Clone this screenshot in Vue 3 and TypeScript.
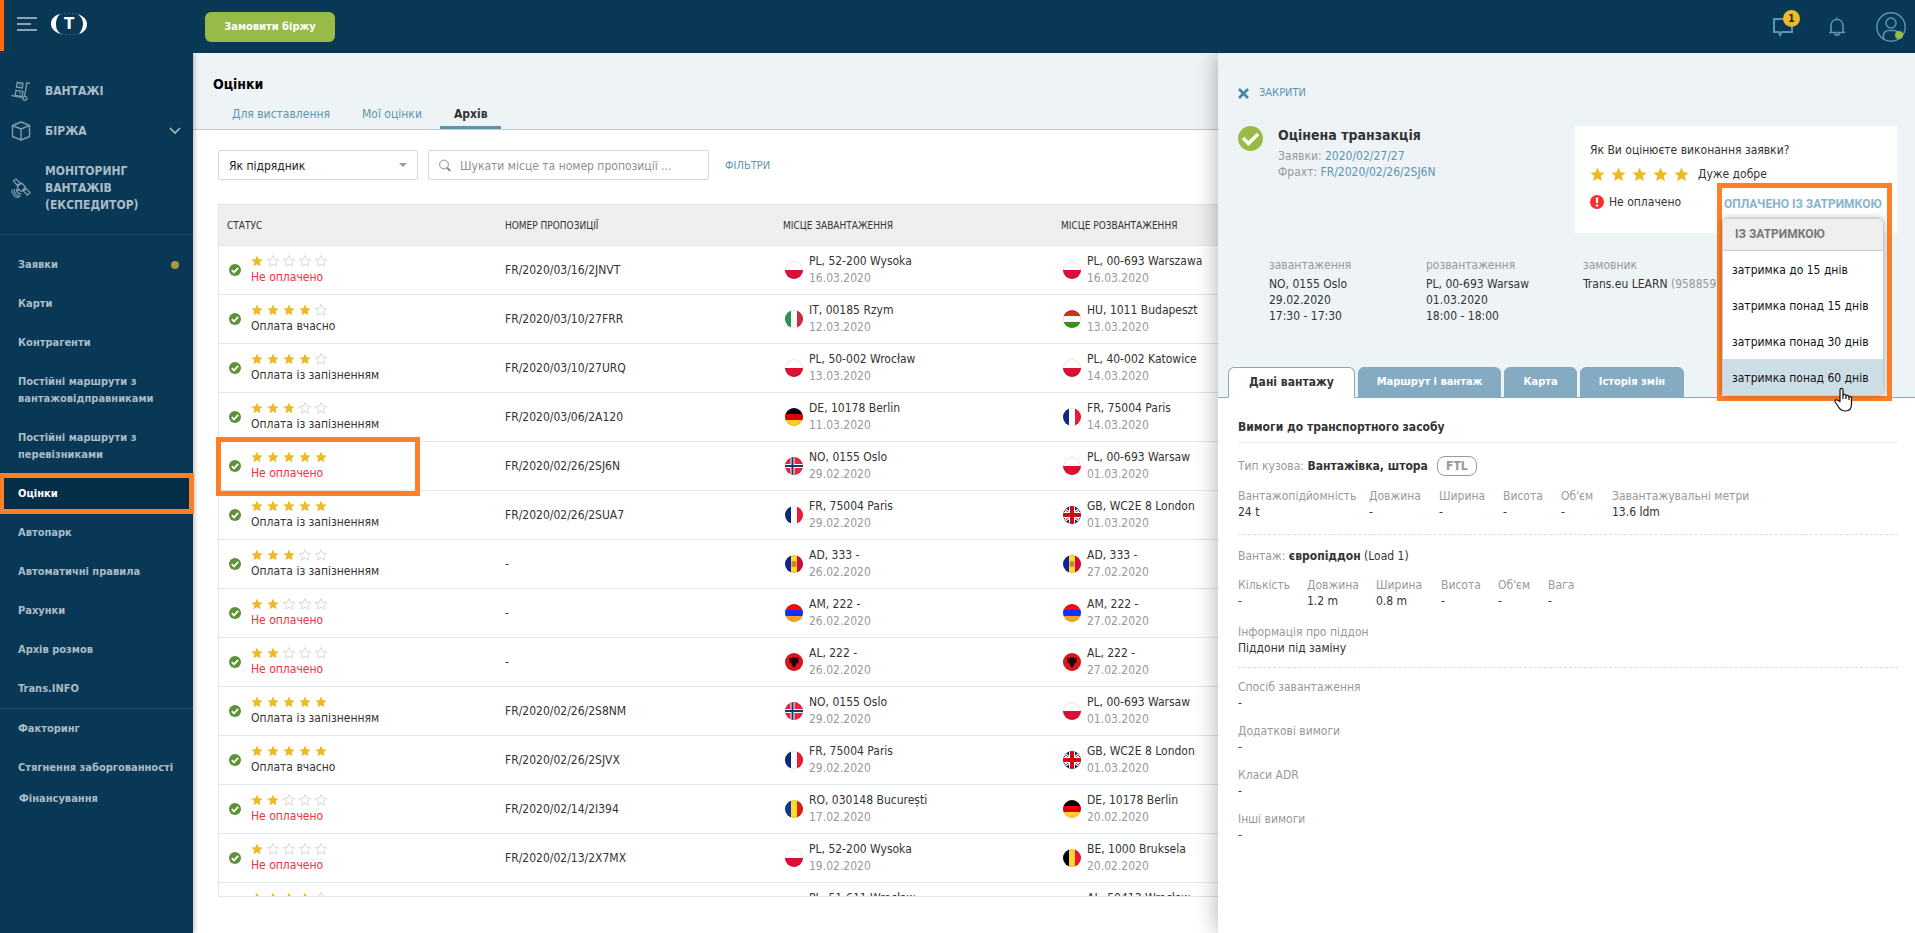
<script setup lang="ts">
import { ref } from 'vue'

interface MenuItem { label: string; dot?: boolean; active?: boolean }
interface Place { code: string; text: string; date: string }
interface Row { stars: number; status: string; late?: boolean; number: string; from: Place; to: Place; marked?: boolean }
interface Flag { vertical?: boolean; colors: string[] }

const star = 'M8 0.6l2.2 5 5.4.5-4.1 3.6 1.2 5.3L8 12.2 3.3 15l1.2-5.3L.4 6.1l5.4-.5z'

const menu: MenuItem[] = [
  { label: 'Заявки', dot: true },
  { label: 'Карти' },
  { label: 'Контрагенти' },
  { label: 'Постійні маршрути з вантажовідправниками' },
  { label: 'Постійні маршрути з перевізниками' },
  { label: 'Оцінки', active: true },
  { label: 'Автопарк' },
  { label: 'Автоматичні правила' },
  { label: 'Рахунки' },
  { label: 'Архів розмов' },
  { label: 'Trans.INFO' },
]
const services: MenuItem[] = [
  { label: 'Факторинг' },
  { label: 'Стягнення заборгованності' },
]

const flags: Record<string, Flag> = {
  PL: { colors: ['#ffffff', '#dc1035'] },
  IT: { vertical: true, colors: ['#2c9450', '#ffffff', '#cf2b3a'] },
  HU: { colors: ['#d5301f', '#ffffff', '#3d8f1d'] },
  DE: { colors: ['#000000', '#dd0000', '#ffce29'] },
  FR: { vertical: true, colors: ['#0a2c80', '#ffffff', '#f01a32'] },
  AD: { vertical: true, colors: ['#11239c', '#fedd22', '#d4083a'] },
  AM: { colors: ['#ff0808', '#1030ff', '#ffa01e'] },
  RO: { vertical: true, colors: ['#0c3a9a', '#fddb2b', '#de1f10'] },
  BE: { vertical: true, colors: ['#000000', '#ffd42c', '#f01634'] },
  AL: { colors: ['#e0151c'] },
  NO: { colors: ['#ec2440'] },
  GB: { colors: ['#1a1e70'] },
}

const p = (code: string, text: string, date: string): Place => ({ code, text, date })
const unpaid = 'Не оплачено'
const onTime = 'Оплата вчасно'
const delayed = 'Оплата із запізненням'

const rows: Row[] = [
  { stars: 1, status: unpaid, late: true, number: 'FR/2020/03/16/2JNVT', from: p('PL', '52-200 Wysoka', '16.03.2020'), to: p('PL', '00-693 Warszawa', '16.03.2020') },
  { stars: 4, status: onTime, number: 'FR/2020/03/10/27FRR', from: p('IT', '00185 Rzym', '12.03.2020'), to: p('HU', '1011 Budapeszt', '13.03.2020') },
  { stars: 4, status: delayed, number: 'FR/2020/03/10/27URQ', from: p('PL', '50-002 Wrocław', '13.03.2020'), to: p('PL', '40-002 Katowice', '14.03.2020') },
  { stars: 3, status: delayed, number: 'FR/2020/03/06/2A120', from: p('DE', '10178 Berlin', '11.03.2020'), to: p('FR', '75004 Paris', '14.03.2020') },
  { stars: 5, status: unpaid, late: true, marked: true, number: 'FR/2020/02/26/2SJ6N', from: p('NO', '0155 Oslo', '29.02.2020'), to: p('PL', '00-693 Warsaw', '01.03.2020') },
  { stars: 5, status: delayed, number: 'FR/2020/02/26/2SUA7', from: p('FR', '75004 Paris', '29.02.2020'), to: p('GB', 'WC2E 8 London', '01.03.2020') },
  { stars: 3, status: delayed, number: '-', from: p('AD', '333 -', '26.02.2020'), to: p('AD', '333 -', '27.02.2020') },
  { stars: 2, status: unpaid, late: true, number: '-', from: p('AM', '222 -', '26.02.2020'), to: p('AM', '222 -', '27.02.2020') },
  { stars: 2, status: unpaid, late: true, number: '-', from: p('AL', '222 -', '26.02.2020'), to: p('AL', '222 -', '27.02.2020') },
  { stars: 5, status: delayed, number: 'FR/2020/02/26/2S8NM', from: p('NO', '0155 Oslo', '29.02.2020'), to: p('PL', '00-693 Warsaw', '01.03.2020') },
  { stars: 5, status: onTime, number: 'FR/2020/02/26/2SJVX', from: p('FR', '75004 Paris', '29.02.2020'), to: p('GB', 'WC2E 8 London', '01.03.2020') },
  { stars: 2, status: unpaid, late: true, number: 'FR/2020/02/14/2I394', from: p('RO', '030148 București', '17.02.2020'), to: p('DE', '10178 Berlin', '20.02.2020') },
  { stars: 1, status: unpaid, late: true, number: 'FR/2020/02/13/2X7MX', from: p('PL', '52-200 Wysoka', '19.02.2020'), to: p('BE', '1000 Bruksela', '20.02.2020') },
  { stars: 4, status: '', number: '', from: p('PL', '51-611 Wrocław', ''), to: p('AL', '50413 Wrocław', '') },
]

const pageTabs = ['Для виставлення', 'Мої оцінки', 'Архів']
const pageTab = ref('Архів')
const role = ref('Як підрядник')
const query = ref('')

const detailTabs = ['Дані вантажу', 'Маршрут і вантаж', 'Карта', 'Історія змін']
const detailTab = ref('Дані вантажу')

const delays = ['затримка до 15 днів', 'затримка понад 15 днів', 'затримка понад 30 днів', 'затримка понад 60 днів']
const hovered = ref(3)

const vehicle: [string, string][] = [
  ['Вантажопідйомність', '24 t'], ['Довжина', '-'], ['Ширина', '-'], ['Висота', '-'], ["Об'єм", '-'], ['Завантажувальні метри', '13.6 ldm'],
]
const load: [string, string][] = [
  ['Кількість', '-'], ['Довжина', '1.2 m'], ['Ширина', '0.8 m'], ['Висота', '-'], ["Об'єм", '-'], ['Вага', '-'],
]
const extras: [string, string][] = [
  ['Спосіб завантаження', '-'], ['Додаткові вимоги', '-'], ['Класи ADR', '-'], ['Інші вимоги', '-'],
]
</script>

<template>
  <div class="app">
    <header class="topbar">
      <button class="icon-btn burger" type="button" aria-label="Меню">
        <svg width="20" height="16" viewBox="0 0 20 16" fill="none" stroke="#8aa5b6" stroke-width="2"><path d="M0 2h20M0 8h14M0 14h20" /></svg>
      </button>
      <a class="logo" href="#" aria-label="Trans">
        <svg width="38" height="22" viewBox="0 0 38 22">
          <path d="M10 1C3 3 1 7 1 11s3 8 10 10C7 18 6 15 6 11s1-7 4-10z" fill="#fff" />
          <path d="M27 1c7 2 10 6 10 10s-2 8-8 10c2-3 4-6 4-10s-2-8-6-10z" fill="#fff" />
          <path d="M10 1c5-1 11-1 17 0M11 21c5 1 11 1 17 0" fill="none" stroke="#fff" stroke-opacity=".25" stroke-dasharray="2 2" />
          <text x="19" y="16" text-anchor="middle" fill="#fff" font-family="DejaVu Sans, sans-serif" font-size="15" font-weight="700">T</text>
        </svg>
      </a>
      <button class="order" type="button">Замовити біржу</button>
      <div class="tools">
        <button class="icon-btn chat" type="button" aria-label="Повідомлення">
          <svg width="22" height="20" viewBox="0 0 22 20" fill="none" stroke="#5b95b3" stroke-width="2"><path d="M11 2H2v13h5l1 3 2-3h10V9" /></svg>
          <span class="badge">1</span>
        </button>
        <button class="icon-btn bell" type="button" aria-label="Сповіщення">
          <svg width="18" height="20" viewBox="0 0 18 20" fill="none" stroke="#5b95b3" stroke-width="1.6"><path d="M1 15.5h16M3 15V9c0-4 2.500-6.500 6-6.500S15 5 15 9v6M9 .5v2M6.500 16.500c.5 2.200 4.500 2.200 5 0" /></svg>
        </button>
        <button class="icon-btn avatar" type="button" aria-label="Профіль">
          <svg width="30" height="30" viewBox="0 0 30 30" fill="none" stroke="#5b95b3" stroke-width="1.5"><circle cx="15" cy="15" r="14.200" /><circle cx="15" cy="11" r="5" /><path d="M7.500 27v-2.500c0-4 2-6 5-6h5c3 0 4.500 1 5 3" /><circle cx="23" cy="23" r="4" fill="#98bb48" stroke="none" /></svg>
        </button>
      </div>
    </header>

    <div class="body">
      <nav class="sidebar" aria-label="Головне меню">
        <a class="main-link" href="#">
          <svg width="20" height="20" viewBox="0 0 20 20" fill="none" stroke="#7f9bad" stroke-width="1.300"><path d="M.5 14.500l11 2.200M19 2.200l-3.200-.2-2.200 13.200" /><circle cx="14" cy="17.200" r="1.900" /><path d="M5 9.300l7 .9-.8 5.200-7-1.100zM6.200 1.500l5.800.8-.7 4.600-5.800-.8zM8 11.800l2 .3M8.500 3.800l1.500.2" /></svg>
          <span>ВАНТАЖІ</span>
        </a>
        <a class="main-link" href="#">
          <svg width="20" height="20" viewBox="0 0 20 20" fill="none" stroke="#7f9bad" stroke-width="1.400" stroke-linejoin="round"><path d="M10 1l8.500 3.500v11L10 19l-8.500-3.500v-11zM1.500 4.500L10 8l8.500-3.500M10 8v11" /></svg>
          <span>БІРЖА</span>
          <svg class="chevron" width="12" height="8" viewBox="0 0 12 8" fill="none" stroke="#a9bac5" stroke-width="1.600"><path d="M1 1l5 5 5-5" /></svg>
        </a>
        <a class="main-link tall" href="#">
          <svg width="20" height="20" viewBox="0 0 20 20" fill="none" stroke="#7f9bad" stroke-width="1.300"><path d="M2.500 3L5 1l4 4-2.500 2.500zM12.500 13l2.500-2.500 4 4-2.500 2.500zM6.500 8.500l4-3.500 4 4-3.800 4.200c-2-.3-4-2.300-4.200-4.700zM8.500 11l-2 2M5.500 10.500c-.5 3 1.500 5.500 4.500 5.500M3.300 11c-.5 4.500 2.500 7.500 6.500 7.200M1 11.500C.8 16.500 4 19.500 8 19.500" /></svg>
          <span>МОНІТОРИНГ ВАНТАЖІВ (ЕКСПЕДИТОР)</span>
        </a>
        <ul class="menu">
          <li v-for="m in menu" :key="m.label">
            <a href="#" :class="{ active: m.active }"><span>{{ m.label }}</span><i v-if="m.dot" class="dot"></i></a>
          </li>
        </ul>
        <ul class="menu services">
          <li v-for="m in services" :key="m.label"><a href="#"><span>{{ m.label }}</span></a></li>
          <li><a class="compact" href="#">Фінансування</a></li>
        </ul>
      </nav>

      <main class="page">
        <div class="page-head">
          <h1>Оцінки</h1>
          <div class="page-tabs" role="tablist">
            <button v-for="t in pageTabs" :key="t" type="button" role="tab" :aria-selected="t === pageTab" :class="{ on: t === pageTab }" @click="pageTab = t">{{ t }}</button>
          </div>
        </div>

        <div class="filters">
          <div class="select-box">
            <select v-model="role" aria-label="Роль"><option>Як підрядник</option></select>
            <svg width="8" height="4" viewBox="0 0 8 4"><path d="M0 0h8L4 4z" fill="#999" /></svg>
          </div>
          <div class="search">
            <svg width="12" height="13" viewBox="0 0 12 13" fill="none" stroke="#8c8c8c"><circle cx="5" cy="5.500" r="4.400" /><path d="M8 8.500l3.200 3.500" stroke-width="2" /></svg>
            <input v-model="query" type="text" placeholder="Шукати місце та номер пропозиції ..." aria-label="Пошук" />
          </div>
          <button class="link" type="button">ФІЛЬТРИ</button>
        </div>

        <div class="table-wrap">
          <table>
            <thead>
              <tr><th>СТАТУС</th><th>НОМЕР ПРОПОЗИЦІЇ</th><th>МІСЦЕ ЗАВАНТАЖЕННЯ</th><th>МІСЦЕ РОЗВАНТАЖЕННЯ</th></tr>
            </thead>
            <tbody>
              <tr v-for="(r, i) in rows" :key="i">
                <td :class="{ marked: r.marked }">
                  <div class="status">
                    <svg width="12" height="12" viewBox="0 0 12 12"><circle cx="6" cy="6" r="6" fill="#5f9138" /><path d="M2.800 6.200l2.200 2.200 4.200-4.600" fill="none" stroke="#fff" stroke-width="1.800" /></svg>
                    <div>
                      <div class="stars">
                        <svg v-for="n in 5" :key="n" width="12" height="12" viewBox="0 0 16 16"><path :d="star" :class="n <= r.stars ? 'full' : 'empty'" /></svg>
                      </div>
                      <div class="status-text" :class="{ late: r.late }">{{ r.status }}</div>
                    </div>
                  </div>
                </td>
                <td class="number">{{ r.number }}</td>
                <td v-for="(pl, k) in [r.from, r.to]" :key="k">
                  <div class="place">
                    <svg class="flag" width="18" height="18" viewBox="0 0 18 18">
                      <template v-if="flags[pl.code].vertical">
                        <rect v-for="(c, j) in flags[pl.code].colors" :key="j" :x="j * 6" y="0" width="6" height="18" :fill="c" />
                      </template>
                      <template v-else>
                        <rect v-for="(c, j) in flags[pl.code].colors" :key="j" x="0" :y="(j * 18) / flags[pl.code].colors.length" width="18" :height="18 / flags[pl.code].colors.length" :fill="c" />
                      </template>
                      <template v-if="pl.code === 'NO'">
                        <path d="M7.500 0v18M0 9h18" stroke="#fff" stroke-width="4" />
                        <path d="M7.500 0v18M0 9h18" stroke="#123a72" stroke-width="2" />
                      </template>
                      <template v-if="pl.code === 'GB'">
                        <path d="M0 2l18 14M0 16L18 2" stroke="#fff" stroke-width="3" />
                        <path d="M0 2l18 14M0 16L18 2" stroke="#c8202c" stroke-width="1" />
                        <path d="M9 0v18M0 9h18" stroke="#fff" stroke-width="6" />
                        <path d="M9 0v18M0 9h18" stroke="#cf0a14" stroke-width="4" />
                      </template>
                      <template v-if="pl.code === 'AD'">
                        <rect x="6.500" y="6" width="5" height="6" rx="1" fill="#d4943a" /><path d="M7 9h4M9 6.500v5" stroke="#b8702c" stroke-width=".7" />
                      </template>
                      <path v-if="pl.code === 'AL'" d="M9 5L7.500 3.500 7.300 5.500 4 4.500l.5 2 .2 4 1.800-.5.500 2.200L9 15l2-2.800.5-2.200 1.800.5.200-4 .5-2-3.300 1-.2-2z" fill="#1c0606" />
                      <circle cx="9" cy="9" r="8.500" fill="none" stroke="#000" stroke-opacity=".13" />
                    </svg>
                    <div><div>{{ pl.code }}, {{ pl.text }}</div><div class="date">{{ pl.date }}</div></div>
                  </div>
                </td>
              </tr>
            </tbody>
          </table>
        </div>
      </main>

      <aside class="panel">
        <div class="panel-head">
          <button class="close" type="button">
            <svg width="11" height="11" viewBox="0 0 11 11" fill="none" stroke="#4784a4" stroke-width="2.600"><path d="M1 1l9 9M10 1l-9 9" /></svg>
            <span>ЗАКРИТИ</span>
          </button>
          <div class="summary">
            <svg width="25" height="25" viewBox="0 0 25 25"><circle cx="12.500" cy="12.500" r="12.500" fill="#98bb48" /><path d="M5 12l5.500 5.500L20 8" fill="none" stroke="#fff" stroke-width="3.400" /></svg>
            <div class="transaction">
              <h2>Оцінена транзакція</h2>
              <p>Заявки: <a href="#">2020/02/27/27</a></p>
              <p>Фрахт: <a href="#">FR/2020/02/26/2SJ6N</a></p>
            </div>
            <div class="card">
              <p>Як Ви оцінюєте виконання заявки?</p>
              <div class="rate">
                <div class="rate-stars"><svg v-for="n in 5" :key="n" width="15" height="15" viewBox="0 0 16 16"><path :d="star" class="full" /></svg></div>
                <span>Дуже добре</span>
              </div>
              <div class="unpaid">
                <svg width="14" height="14" viewBox="0 0 14 14"><circle cx="7" cy="7" r="7" fill="#fb2d2d" /><path d="M7 2.500V8M7 9.500v2" stroke="#fff" stroke-width="2.200" /></svg>
                <span>Не оплачено</span>
              </div>
              <div class="callout">
                <button class="delayed" type="button">ОПЛАЧЕНО ІЗ ЗАТРИМКОЮ</button>
                <div class="dropdown">
                  <div class="dropdown-title">ІЗ ЗАТРИМКОЮ</div>
                  <button v-for="(d, i) in delays" :key="d" type="button" :class="{ hover: i === hovered }" @mouseenter="hovered = i">{{ d }}</button>
                </div>
                <svg class="cursor" width="20" height="25" viewBox="0 0 20 25" fill="#fff" stroke="#111" stroke-width="1.200" stroke-linejoin="round"><path d="M6 14.500V3c0-2.200 3-2.200 3 0v5c.5-1 2.800-.8 3 .8.700-.8 2.700-.5 2.900.9.800-.6 2.600-.2 2.600 1.600v6c0 4-2 6.700-6 6.700-3.500 0-5.500-1.500-7-4L1.200 15c-1-2 1-3 2.300-1.800z" /><path d="M9 8v4M12 9v3M15 10v3" fill="none" /></svg>
              </div>
            </div>
          </div>
          <div class="order-info">
            <div><h3>завантаження</h3><p>NO, 0155 Oslo</p><p>29.02.2020</p><p>17:30 - 17:30</p></div>
            <div><h3>розвантаження</h3><p>PL, 00-693 Warsaw</p><p>01.03.2020</p><p>18:00 - 18:00</p></div>
            <div><h3>замовник</h3><p>Trans.eu LEARN <span class="muted">(958859</span></p></div>
          </div>
          <div class="detail-tabs" role="tablist">
            <button v-for="t in detailTabs" :key="t" type="button" role="tab" :aria-selected="t === detailTab" :class="{ on: t === detailTab }" @click="detailTab = t">{{ t }}</button>
          </div>
        </div>

        <div class="details">
          <h2>Вимоги до транспортного засобу</h2>
          <section class="group">
            <div class="type">
              <span><span class="muted">Тип кузова:</span> <b>Вантажівка, штора</b></span><span class="pill">FTL</span>
            </div>
            <dl class="specs vehicle"><div v-for="s in vehicle" :key="s[0]"><dt>{{ s[0] }}</dt><dd>{{ s[1] }}</dd></div></dl>
          </section>
          <section class="group cargo">
            <p><span class="muted">Вантаж:</span> <b>європіддон</b> (Load 1)</p>
            <dl class="specs load"><div v-for="s in load" :key="s[0]"><dt>{{ s[0] }}</dt><dd>{{ s[1] }}</dd></div></dl>
            <dl class="pallet"><dt>Інформація про піддон</dt><dd>Піддони під заміну</dd></dl>
          </section>
          <dl class="extras"><div v-for="s in extras" :key="s[0]"><dt>{{ s[0] }}</dt><dd>{{ s[1] }}</dd></div></dl>
        </div>
      </aside>
    </div>
  </div>
</template>

<style>
body { margin: 0; }
</style>

<style scoped>
.app, .app * { box-sizing: border-box; }
.app {
  height: 100vh;
  display: flex;
  flex-direction: column;
  overflow: hidden;
  background: #fff;
  color: #333;
  font: 12px/16px 'DejaVu Sans Condensed', 'DejaVu Sans', sans-serif;
}
h1, h2, h3, p, ul, dl, dd { margin: 0; padding: 0; }
ul { list-style: none; }
a { text-decoration: none; color: #5c95b3; }
svg { display: block; flex: none; }
button, input, select { font: inherit; color: inherit; border: 0; padding: 0; background: none; margin: 0; }
button { cursor: pointer; white-space: nowrap; }
.muted, dt { color: #999; }

.topbar {
  flex: none;
  height: 53px;
  display: flex;
  align-items: center;
  background: #083856;
  position: relative;
  z-index: 3;
  padding: 0 9px 0 17px;
}
.topbar::before { content: ''; position: absolute; left: 0; top: 0; width: 4px; height: 51px; background: #ff6a0c; }
.icon-btn { display: block; position: relative; }
.topbar > .burger { margin-bottom: 5px; }
.logo { margin: 0 117px 6px 13px; }
.order { width: 130px; height: 30px; border-radius: 6px; background: #98bb48; color: #fff; font-weight: 700; font-size: 11px; }
.tools { margin-left: auto; display: flex; align-items: center; }
.badge {
  position: absolute; left: 11px; top: -7px; width: 17px; height: 17px; border-radius: 50%;
  background: #edb926; color: #222; font-weight: 700; font-size: 10px; line-height: 17px; text-align: center;
}
.bell { margin: 0 30px 0 34px; }

.body { flex: 1; min-height: 0; display: flex; }
.sidebar { flex: none; width: 193px; background: #083856; padding-top: 18px; position: relative; z-index: 1; box-shadow: 1px 0 5px rgba(0, 0, 0, .3); }
.main-link { display: flex; align-items: center; height: 40px; padding: 0 12px 0 11px; color: #abbcc7; font-weight: 700; line-height: 17px; }
.main-link span { margin-left: 14px; }
.main-link .chevron { margin-left: auto; }
.main-link.tall { height: 74px; }
.menu { margin-top: 9px; border-top: 1px solid #0d4f7c; padding-top: 10px; }
.menu a { display: flex; align-items: center; padding: 11px 12px 11px 18px; color: #abbcc7; font-weight: 700; font-size: 11px; line-height: 17px; position: relative; }
.menu .active { background: #052f49; color: #fff; }
.menu .active::after { content: ''; position: absolute; inset: -1px; border: 5px solid #ff7f27; }
.dot { width: 8px; height: 8px; border-radius: 50%; background: #ad9839; margin: 0 2px 0 auto; }
.services { margin-top: 0; padding-top: 0; }
.menu .compact { padding-top: 3px; padding-bottom: 3px; padding-left: 19px; }

.page { flex: 1; min-width: 0; display: flex; flex-direction: column; }
.page-head { background: #eef3f6; border-bottom: 1px solid #c3c9cd; padding: 21px 20px 0; }
h1 { font-size: 14px; line-height: 20px; color: #000; }
.page-tabs { display: flex; gap: 4px; margin-top: 11px; padding-left: 5px; }
.page-tabs button { height: 24px; padding: 0 14px 3px; color: #5c95b3; border-bottom: 3px solid transparent; }
.page-tabs button.on { color: #333; font-weight: 700; border-color: #5c95b3; }

.filters { display: flex; align-items: center; padding: 20px 25px 24px; }
.select-box, .search { height: 30px; border: 1px solid #d7d7d7; border-radius: 2px; display: flex; align-items: center; }
.select-box { width: 200px; margin-right: 10px; position: relative; color: #222; }
.select-box select { appearance: none; width: 100%; height: 28px; padding: 1px 28px 0 10px; outline: none; }
.select-box svg { position: absolute; right: 10px; top: 12px; }
.search { width: 281px; padding: 0 10px; gap: 9px; margin-right: 16px; }
.search input { flex: 1; min-width: 0; height: 28px; padding-top: 1px; outline: none; }
.search input::placeholder { color: #8f8f8f; opacity: 1; }
.link { color: #5c95b3; font-size: 11px; padding-top: 2px; }

.table-wrap { flex: 1; min-height: 0; margin: 0 0 36px 25px; border: 1px solid #dfe6ec; border-right: 0; overflow-x: visible; overflow-y: clip; }
table { width: 100%; table-layout: fixed; border-collapse: separate; border-spacing: 0; }
th, td { border-bottom: 1px solid #dfe6ec; text-align: left; vertical-align: middle; white-space: nowrap; }
th:not(:last-child) { width: 278px; }
th { height: 41px; padding: 2px 8px 0; background: #efefef; font-size: 10px; font-weight: 400; }
td { height: 49px; padding: 0 10px; }
td.number { padding-left: 8px; }
td.marked { position: relative; }
td.marked::after { content: ''; position: absolute; left: -3px; top: -5px; bottom: -6px; width: 194px; border: 5px solid #ff7f27; }
.status { display: flex; align-items: center; gap: 10px; }
.stars { display: flex; gap: 4px; margin-bottom: 2px; }
.status-text { height: 16px; }
.late { color: #f22f3b; }
.full { fill: #edb926; }
.empty { fill: none; stroke: #d4d4d4; stroke-width: 1.2; }
.place { display: flex; align-items: center; gap: 6px; line-height: 17px; }
.flag { border-radius: 50%; }
.date { color: #999; height: 17px; }

.panel { flex: 0 0 697px; position: relative; z-index: 2; background: #fff; box-shadow: -2px 0 20px rgba(0, 0, 0, .28); }
.panel-head { background: #eef3f6; border-bottom: 1px solid #85abc3; padding-top: 32px; }
.close { display: flex; align-items: center; gap: 10px; margin-left: 20px; color: #5c95b3; font-size: 11px; line-height: 16px; }
.summary { display: flex; align-items: flex-start; margin-top: 25px; padding: 0 18px 0 20px; }
.transaction { margin-left: 15px; color: #999; }
.transaction h2 { font-size: 14px; line-height: 19px; margin-bottom: 3px; color: #333; }
.card { position: relative; width: 322px; height: 107px; margin-left: auto; background: #fff; padding: 16px 15px; }
.rate { display: flex; align-items: center; gap: 9px; margin-top: 8px; }
.rate-stars { display: flex; gap: 6px; }
.unpaid { display: flex; align-items: center; gap: 5px; margin-top: 12px; }
.callout { position: absolute; right: 5px; top: 57px; width: 175px; height: 218px; border: 5px solid #ff7f27; z-index: 1; }
.delayed { display: block; height: 30px; padding: 2px 2px 0; color: #85b4cc; font-family: Roboto, 'Liberation Sans', sans-serif; font-weight: 700; }
.dropdown { width: 162px; background: #fff; border: 1px solid #ccc; border-radius: 6px; overflow: hidden; box-shadow: 0 0 6px rgba(0, 0, 0, .3); }
.dropdown-title { height: 32px; line-height: 31px; padding-left: 12px; background: #efefef; border-bottom: 1px solid #ccc; color: #777; font-family: Roboto, 'Liberation Sans', sans-serif; font-weight: 700; }
.dropdown button { display: block; width: 100%; height: 36px; padding: 2px 0 0 9px; text-align: left; color: #111; }
.dropdown .hover { background: #ccdde6; }
.cursor { position: absolute; left: 112px; top: 199px; }

.order-info { display: grid; grid-template-columns: 157px 157px 1fr; margin: 24px 0 43px 51px; }
.order-info h3 { font-size: 12px; font-weight: 400; color: #999; margin-bottom: 3px; }
.detail-tabs { display: flex; gap: 3px; padding-left: 10px; margin-bottom: -1px; }
.detail-tabs button { height: 31px; padding: 0 18px 2px; border-radius: 6px 6px 0 0; border: 1px solid #85abc3; background: #85abc3; color: #fff; font-weight: 700; font-size: 11px; }
.detail-tabs button.on { padding: 0 20px 2px; background: #fff; border-bottom-color: #fff; color: #333; font-size: 12px; }

.details { padding: 21px 17px 20px 20px; }
.details h2 { font-size: 12px; line-height: 16px; padding-bottom: 7px; border-bottom: 1px solid #eee; }
.group { padding: 13px 0 14px; border-bottom: 1px dashed #d5e0ea; }
.cargo { padding-bottom: 11px; }
.type { display: flex; align-items: center; gap: 9px; }
.pill { width: 40px; height: 20px; border: 1px solid #999; border-radius: 8px; color: #999; font-weight: 700; line-height: 18px; text-align: center; }
.specs { display: grid; }
.specs dt { white-space: nowrap; }
.vehicle { grid-template-columns: 131px 70px 64px 58px 51px auto; margin-top: 12px; }
.load { grid-template-columns: 69px 69px 65px 57px 50px auto; margin-top: 13px; }
.pallet { margin-top: 15px; }
.extras div { padding: 11px 0 1px; }
</style>
